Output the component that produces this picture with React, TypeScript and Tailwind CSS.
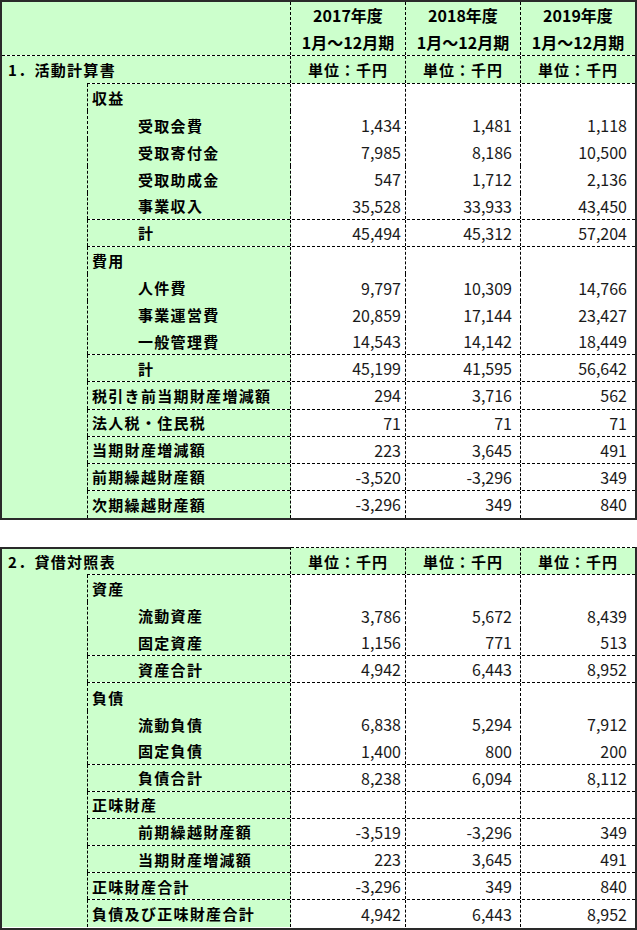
type Row = {
  label: string;
  indent?: boolean;
  values?: [string, string, string];
  line?: boolean;
};

const activity: Row[] = [
  { label: "収益" },
  { label: "受取会費", indent: true, values: ["1,434", "1,481", "1,118"] },
  { label: "受取寄付金", indent: true, values: ["7,985", "8,186", "10,500"] },
  { label: "受取助成金", indent: true, values: ["547", "1,712", "2,136"] },
  { label: "事業収入", indent: true, values: ["35,528", "33,933", "43,450"], line: true },
  { label: "計", indent: true, values: ["45,494", "45,312", "57,204"], line: true },
  { label: "費用" },
  { label: "人件費", indent: true, values: ["9,797", "10,309", "14,766"] },
  { label: "事業運営費", indent: true, values: ["20,859", "17,144", "23,427"] },
  { label: "一般管理費", indent: true, values: ["14,543", "14,142", "18,449"], line: true },
  { label: "計", indent: true, values: ["45,199", "41,595", "56,642"], line: true },
  { label: "税引き前当期財産増減額", values: ["294", "3,716", "562"], line: true },
  { label: "法人税・住民税", values: ["71", "71", "71"], line: true },
  { label: "当期財産増減額", values: ["223", "3,645", "491"], line: true },
  { label: "前期繰越財産額", values: ["-3,520", "-3,296", "349"], line: true },
  { label: "次期繰越財産額", values: ["-3,296", "349", "840"] },
];

const balance: Row[] = [
  { label: "資産" },
  { label: "流動資産", indent: true, values: ["3,786", "5,672", "8,439"] },
  { label: "固定資産", indent: true, values: ["1,156", "771", "513"], line: true },
  { label: "資産合計", indent: true, values: ["4,942", "6,443", "8,952"], line: true },
  { label: "負債" },
  { label: "流動負債", indent: true, values: ["6,838", "5,294", "7,912"] },
  { label: "固定負債", indent: true, values: ["1,400", "800", "200"], line: true },
  { label: "負債合計", indent: true, values: ["8,238", "6,094", "8,112"], line: true },
  { label: "正味財産", line: true },
  { label: "前期繰越財産額", indent: true, values: ["-3,519", "-3,296", "349"], line: true },
  { label: "当期財産増減額", indent: true, values: ["223", "3,645", "491"], line: true },
  { label: "正味財産合計", values: ["-3,296", "349", "840"], line: true },
  { label: "負債及び正味財産合計", values: ["4,942", "6,443", "8,952"] },
];

const colW = ["w-[115px]", "w-[115px]", "w-[114px]"];

function Body({ rows }: { rows: Row[] }) {
  return (
    <div className="flex">
      <div className="w-[85px] bg-[#ccffcc]" />
      <div className="flex w-[548px] flex-col border-t border-dashed border-black">
        {rows.map((r, i) => (
          <div
            key={i}
            className={`flex h-[27.1px] ${r.line ? "border-b border-dashed border-black" : ""}`}
          >
            <div
              className={`flex w-[204px] items-center border-l border-r border-dashed border-black bg-[#ccffcc] font-bold tracking-[1.3px] text-[15px] ${
                r.indent ? "pl-[50px]" : "pl-[4px]"
              }`}
            >
              {r.label}
            </div>
            {colW.map((w, j) => (
              <div
                key={j}
                className={`${w} flex items-center justify-end bg-white text-[16px] text-[#1a1a1a] ${
                  j < 2 ? "border-r border-dashed border-black" : ""
                } ${j === 0 ? "pr-[4px]" : "pr-[8px]"}`}
              >
                {r.values ? r.values[j] : ""}
              </div>
            ))}
          </div>
        ))}
      </div>
    </div>
  );
}

function Units() {
  return (
    <>
      {colW.map((w, j) => (
        <div
          key={j}
          className={`${w} flex items-center justify-center bg-[#ccffcc] font-bold tracking-[1px] text-[15px] ${
            j < 2 ? "border-r border-dashed border-black" : ""
          }`}
        >
          単位：千円
        </div>
      ))}
    </>
  );
}

export default function App() {
  return (
    <div className="w-[637px] bg-white font-['Noto_Sans_CJK_JP','Noto_Sans',sans-serif] leading-none text-black">
      {/* 1. 活動計算書 */}
      <div className="h-[520px] border-2 border-[#2a2a2a]">
        <div className="flex h-[54.3px] border-b border-dashed border-black">
          <div className="w-[289px] border-r border-dashed border-black bg-[#ccffcc]" />
          {["2017年度", "2018年度", "2019年度"].map((y, j) => (
            <div
              key={y}
              className={`${colW[j]} flex flex-col items-center justify-center gap-[10.5px] bg-[#ccffcc] font-bold text-[16px] ${
                j < 2 ? "border-r border-dashed border-black" : ""
              }`}
            >
              <span>{y}</span>
              <span>1月～12月期</span>
            </div>
          ))}
        </div>
        <div className="flex h-[27.1px]">
          <div className="flex w-[289px] items-center border-r border-dashed border-black bg-[#ccffcc] pl-[6px] font-bold tracking-[1.3px] text-[15px]">
            1．活動計算書
          </div>
          <Units />
        </div>
        <Body rows={activity} />
      </div>

      {/* 2. 貸借対照表 */}
      <div className="mt-[27px] h-[383px] border-2 border-t-0 border-[#2a2a2a]">
        <div className="flex h-[27.1px]">
          <div className="flex w-[289px] items-center border-r border-t-2 border-dashed border-r-black border-t-[#2a2a2a] bg-[#ccffcc] pl-[6px] font-bold tracking-[1.3px] text-[15px] [border-top-style:solid]">
            2．貸借対照表
          </div>
          <div className="flex border-t border-dashed border-black">
            <Units />
          </div>
        </div>
        <Body rows={balance} />
      </div>
    </div>
  );
}
